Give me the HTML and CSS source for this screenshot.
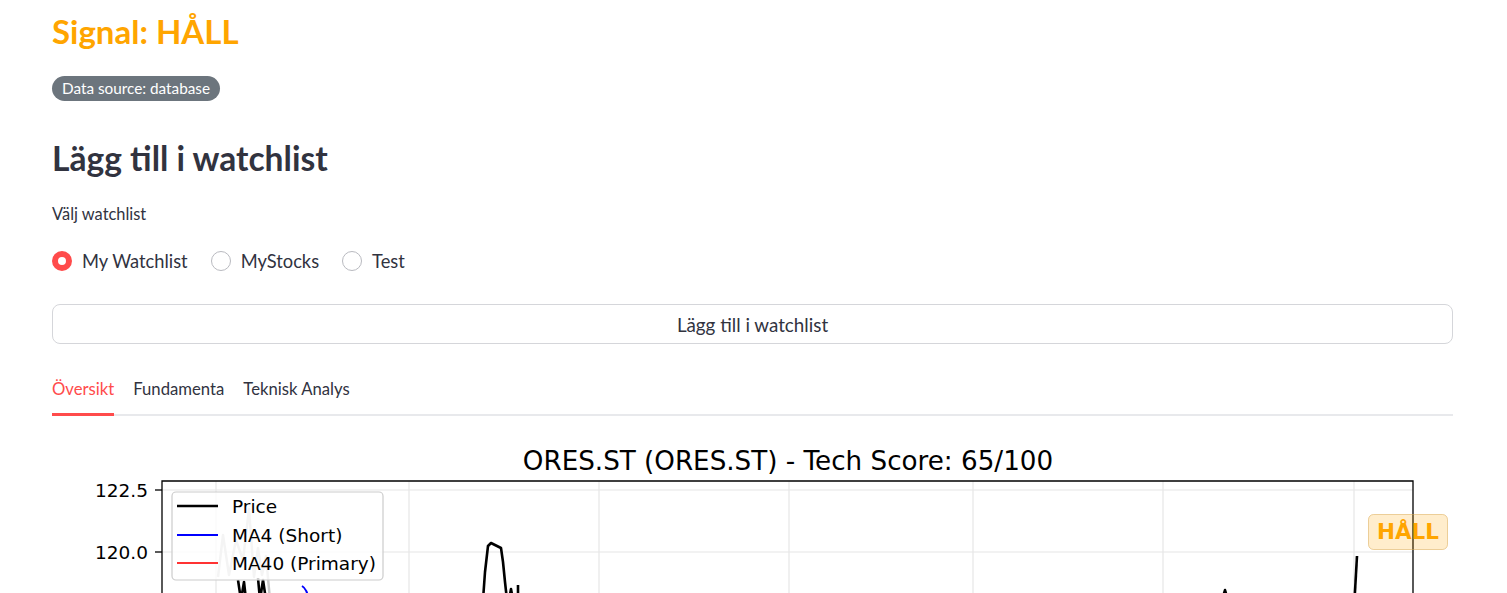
FILE: index.html
```html
<!DOCTYPE html>
<html lang="sv">
<head>
<meta charset="utf-8">
<title>Signal</title>
<link rel="stylesheet" href="styles.css">
</head>
<body>
<main class="main">
  <h1 class="signal">Signal: HÅLL</h1>
  <div class="badge-row"><span class="badge">Data source: database</span></div>
  <h2 class="section-title">Lägg till i watchlist</h2>
  <div class="field-label">Välj watchlist</div>
  <div class="radio-group">
    <label class="radio"><span class="radio-dot checked"></span><span>My Watchlist</span></label>
    <label class="radio"><span class="radio-dot"></span><span>MyStocks</span></label>
    <label class="radio"><span class="radio-dot"></span><span>Test</span></label>
  </div>
  <button class="btn">Lägg till i watchlist</button>
  <div class="tabs">
    <div class="tab active">Översikt</div>
    <div class="tab">Fundamenta</div>
    <div class="tab">Teknisk Analys</div>
  </div>
  <svg class="chart" width="1401" height="500" viewBox="52 430 1401 500" xmlns="http://www.w3.org/2000/svg">
    <rect x="52" y="430" width="1401" height="500" fill="#fff"/>
    <g stroke="#e6e6e6" stroke-width="1.2">
      <line x1="216" y1="481" x2="216" y2="930"/>
      <line x1="409" y1="481" x2="409" y2="930"/>
      <line x1="599" y1="481" x2="599" y2="930"/>
      <line x1="789" y1="481" x2="789" y2="930"/>
      <line x1="973" y1="481" x2="973" y2="930"/>
      <line x1="1163" y1="481" x2="1163" y2="930"/>
      <line x1="1354" y1="481" x2="1354" y2="930"/>
      <line x1="162" y1="490" x2="1413" y2="490"/>
      <line x1="162" y1="552" x2="1413" y2="552"/>
    </g>
    <polyline fill="none" stroke="#c8c8c8" stroke-width="2.5" stroke-linejoin="round"
      points="218,577 223,535 229,575 236,540 243,560 249,509 254,577 258,548 262,575 266,556 270,600"/>
    <g fill="none" stroke="#000" stroke-width="2.6" stroke-linejoin="round">
      <polyline points="238,580 241,600 244,582 246,600"/>
      <polyline points="258,578 260,600 263,580 266,600"/>
      <polyline points="483,600 485,572 488,546 491,543 501,548 503,562 505,582 507,600"/>
      <polyline points="509,600 511,589 513,600"/>
      <line x1="518" y1="585" x2="518" y2="600"/>
      <polyline points="1222,600 1225,590 1228,600"/>
      <line x1="1357" y1="556" x2="1354.5" y2="600"/>
    </g>
    <path d="M302,586 Q307,589 309,600" fill="none" stroke="#0000ff" stroke-width="2"/>
    <g>
      <rect x="172" y="492" width="211" height="88" rx="4" fill="#fff" fill-opacity="0.8" stroke="#cccccc" stroke-width="1.2"/>
      <line x1="177" y1="506" x2="218" y2="506" stroke="#000" stroke-width="2.6"/>
      <line x1="177" y1="535" x2="218" y2="535" stroke="#0000ff" stroke-width="1.8"/>
      <line x1="177" y1="563" x2="218" y2="563" stroke="#ff0000" stroke-width="1.8" stroke-opacity="0.8"/>
      <text class="mpl" x="232" y="513">Price</text>
      <text class="mpl" x="232" y="542">MA4 (Short)</text>
      <text class="mpl" x="232" y="570">MA40 (Primary)</text>
    </g>
    <g stroke="#000" stroke-width="1.3" fill="none">
      <polyline points="162,930 162,481 1413,481 1413,930"/>
      <line x1="155" y1="490" x2="162" y2="490"/>
      <line x1="155" y1="552" x2="162" y2="552"/>
    </g>
    <text class="mpl" x="148" y="497" text-anchor="end">122.5</text>
    <text class="mpl" x="148" y="559" text-anchor="end">120.0</text>
    <text class="mpl-title" x="788" y="470" text-anchor="middle">ORES.ST (ORES.ST) - Tech Score: 65/100</text>
    <rect x="1368.5" y="514.5" width="79" height="35" rx="5" fill="#ffa500" fill-opacity="0.2" stroke="#d9a64a" stroke-opacity="0.5"/>
    <text class="mpl-badge" x="1408" y="539" text-anchor="middle">HÅLL</text>
  </svg>
</main>
</body>
</html>
```
FILE: styles.css
```css
html, body {
  margin: 0;
  padding: 0;
  background: #fff;
  overflow: hidden;
}
body {
  font-family: Lato, "Noto Sans", "Liberation Sans", sans-serif;
  color: #31333f;
}
.main {
  padding: 0 54px 0 52px;
}
.signal {
  margin: 10px 0 0;
  height: 43px;
  line-height: 43px;
  font-size: 33px;
  font-weight: 700;
  color: #ffa500;
}
.badge-row {
  margin-top: 23px;
  height: 25px;
}
.badge {
  display: inline-block;
  height: 25px;
  line-height: 25px;
  padding: 0 10px;
  border-radius: 13px;
  background: #6c757d;
  color: #fff;
  font-size: 15.3px;
}
.section-title {
  margin: 36px 0 0;
  height: 43px;
  line-height: 43px;
  font-size: 33.6px;
  font-weight: 700;
  color: #31333f;
}
.field-label {
  margin-top: 24px;
  height: 20px;
  line-height: 20px;
  font-size: 16.4px;
}
.radio-group {
  margin-top: 25px;
  height: 24px;
  display: flex;
  align-items: center;
  gap: 23px;
}
.radio {
  display: flex;
  align-items: center;
  gap: 10px;
  font-size: 18.3px;
}
.radio-dot {
  box-sizing: border-box;
  width: 20px;
  height: 20px;
  border-radius: 50%;
  border: 1px solid #b9bac0;
  background: #fff;
}
.radio-dot.checked {
  border: 6px solid #ff4b4b;
  background: #fff;
}
.btn {
  display: block;
  box-sizing: border-box;
  margin-top: 31px;
  width: 100%;
  height: 40px;
  border: 1px solid #d5d6da;
  border-radius: 8px;
  background: #fff;
  color: #31333f;
  font-family: inherit;
  font-size: 18.8px;
}
.tabs {
  margin-top: 35px;
  display: flex;
  gap: 19px;
  border-bottom: 2px solid #e8e9ec;
}
.tab {
  position: relative;
  line-height: 20px;
  padding-bottom: 15px;
  font-size: 16.7px;
}
.tab.active {
  color: #ff4b4b;
}
.tab.active::after {
  content: "";
  position: absolute;
  left: 0;
  right: 0;
  bottom: -2px;
  height: 3px;
  background: #ff4b4b;
}
.chart {
  display: block;
  margin-top: 14px;
}
.mpl {
  font-family: "DejaVu Sans", sans-serif;
  font-size: 18.5px;
  fill: #000;
}
.mpl-title {
  font-family: "DejaVu Sans", sans-serif;
  font-size: 26.2px;
  fill: #000;
}
.mpl-badge {
  font-family: "DejaVu Sans", sans-serif;
  font-weight: 700;
  font-size: 21.5px;
  fill: #ffa500;
}
```
